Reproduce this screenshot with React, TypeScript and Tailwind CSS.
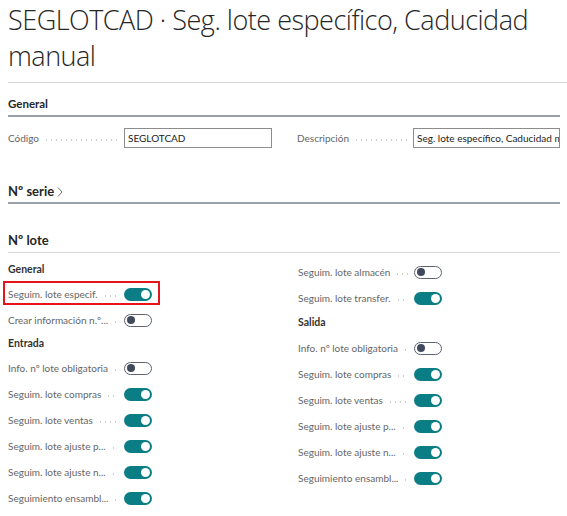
import React from "react";

type Item =
  | { kind: "header"; text: string }
  | { kind: "toggle"; label: string; on: boolean; highlight?: boolean };

const leftItems: Item[] = [
  { kind: "header", text: "General" },
  { kind: "toggle", label: "Seguim. lote especif.", on: true, highlight: true },
  { kind: "toggle", label: "Crear información n.º...", on: false },
  { kind: "header", text: "Entrada" },
  { kind: "toggle", label: "Info. nº lote obligatoria", on: false },
  { kind: "toggle", label: "Seguim. lote compras", on: true },
  { kind: "toggle", label: "Seguim. lote ventas", on: true },
  { kind: "toggle", label: "Seguim. lote ajuste p...", on: true },
  { kind: "toggle", label: "Seguim. lote ajuste n...", on: true },
  { kind: "toggle", label: "Seguimiento ensambl...", on: true },
];

const rightItems: Item[] = [
  { kind: "toggle", label: "Seguim. lote almacén", on: false },
  { kind: "toggle", label: "Seguim. lote transfer.", on: true },
  { kind: "header", text: "Salida" },
  { kind: "toggle", label: "Info. nº lote obligatoria", on: false },
  { kind: "toggle", label: "Seguim. lote compras", on: true },
  { kind: "toggle", label: "Seguim. lote ventas", on: true },
  { kind: "toggle", label: "Seguim. lote ajuste p...", on: true },
  { kind: "toggle", label: "Seguim. lote ajuste n...", on: true },
  { kind: "toggle", label: "Seguimiento ensambl...", on: true },
];

function Toggle({ on }: { on: boolean }) {
  return on ? (
    <div className="flex h-[13px] w-[28px] items-center justify-end rounded-full bg-[#0b7d84] pr-[2px]">
      <div className="size-[9px] rounded-full bg-white" />
    </div>
  ) : (
    <div className="flex h-[13px] w-[28px] items-center rounded-full border border-[#5a6270] bg-white pl-[2px]">
      <div className="size-[8px] rounded-full bg-[#414a5c]" />
    </div>
  );
}

function Label({ text }: { text: string }) {
  return (
    <div className="flex w-[116px] shrink-0 items-center gap-[5px] pr-[6px]">
      <span className="whitespace-nowrap text-[10px] text-[#666]">{text}</span>
      <span className="h-[2px] flex-1 translate-y-[2px] bg-[radial-gradient(circle,#cdcdcd_0.7px,transparent_1px)] bg-[length:5px_2px] bg-repeat-x" />
    </div>
  );
}

function Column({ items, headerH }: { items: Item[]; headerH: string }) {
  return (
    <div className="flex flex-col">
      {items.map((it, i) =>
        it.kind === "header" ? (
          <div key={i} className={`flex items-center text-[10.5px] font-bold text-[#333] ${headerH}`}>
            {it.text}
          </div>
        ) : (
          <div key={i} className="relative flex h-[26px] items-center">
            {it.highlight && (
              <div className="absolute -left-[5px] top-0 h-[24px] w-[157px] border-2 border-[#e8141b]" />
            )}
            <Label text={it.label} />
            <Toggle on={it.on} />
          </div>
        )
      )}
    </div>
  );
}

function SectionTitle({ children, className = "" }: { children: React.ReactNode; className?: string }) {
  return (
    <div className={`mr-[7px] border-b-2 border-[#9aa1ab] font-bold text-[#262626] ${className}`}>
      {children}
    </div>
  );
}

export default function App() {
  return (
    <div className="h-[516px] w-[567px] overflow-hidden bg-white pl-[8px] font-['Lato','Open_Sans',sans-serif]">
      <h1 className="pt-[2px] font-['Open_Sans',sans-serif] text-[27px] font-light leading-[36px] tracking-[-0.5px] text-[#262626]">
        SEGLOTCAD · Seg. lote específico, Caducidad manual
      </h1>
      <div className="mt-[8px] h-px bg-[#d6d6d6]" />

      <SectionTitle className="mt-[12px] pb-[3px] text-[11.5px]">General</SectionTitle>

      <div className="mr-[7px] mt-[11px] flex">
        <div className="flex w-[290px] items-center">
          <Label text="Código" />
          <div className="flex h-[20px] w-[148px] items-center border border-[#8c8c8c] px-[3px] text-[10px] text-[#222]">
            SEGLOTCAD
          </div>
        </div>
        <div className="flex items-center">
          <Label text="Descripción" />
          <div className="flex h-[20px] w-[147px] items-center overflow-hidden whitespace-nowrap border border-[#8c8c8c] px-[3px] text-[10px] text-[#222]">
            Seg. lote específico, Caducidad m
          </div>
        </div>
      </div>

      <SectionTitle className="mt-[34px] flex items-center pb-[0px] text-[13px]">
        Nº serie
        <svg width="8" height="12" viewBox="0 0 8 12" className="ml-[2px]">
          <path d="M2 1.5l4 4.5-4 4.5" fill="none" stroke="#6b6b6b" strokeWidth="1" />
        </svg>
      </SectionTitle>

      <SectionTitle className="mt-[27px] !border-b !border-[#d6d6d6] pb-[2px] text-[13px]">Nº lote</SectionTitle>

      <div className="mt-[6px] flex">
        <div className="w-[290px]">
          <Column items={leftItems} headerH="h-[22px]" />
        </div>
        <Column items={rightItems} headerH="h-[24px]" />
      </div>
    </div>
  );
}
